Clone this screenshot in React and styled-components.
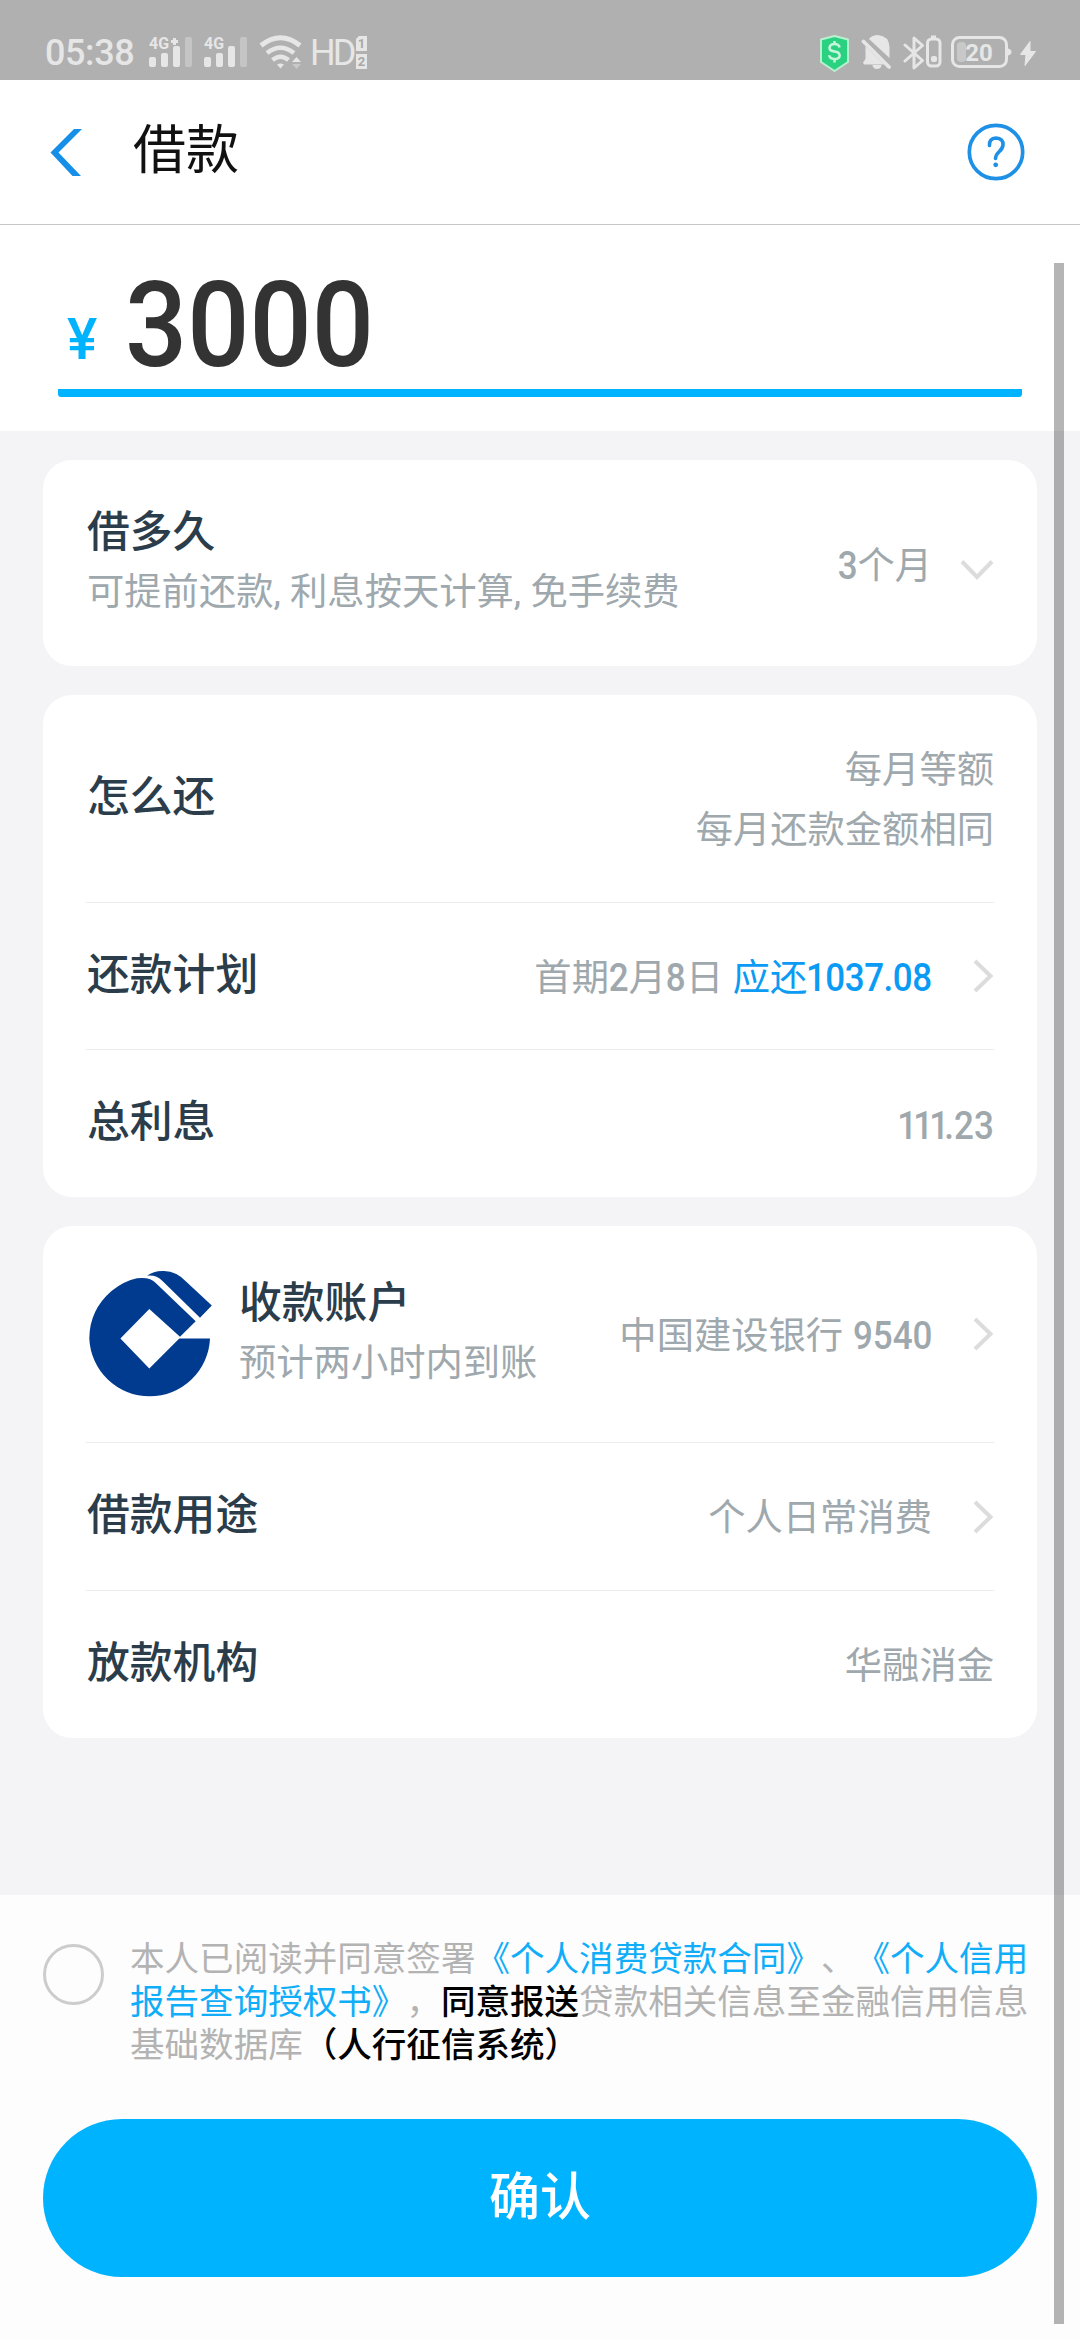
import React from "react";
import styled, { createGlobalStyle } from "styled-components";

const GlobalStyle = createGlobalStyle`
  * { box-sizing: border-box; }
  body { margin: 0; background: #f4f4f7; }
`;

const Screen = styled.div`
  position: relative;
  display: flex;
  flex-direction: column;
  width: 1080px;
  height: 2340px;
  overflow: hidden;
  background: #f4f4f7;
  font-family: Roboto, "Noto Sans CJK SC", sans-serif;
  text-spacing-trim: space-all;
`;

const StatusBar = styled.div`
  display: flex;
  justify-content: space-between;
  height: 80px;
  padding: 33px 44px 0 45px;
  background: #b0b0b0;
  color: #e6e6e6;
`;

const StatusGroup = styled.div`
  display: flex;
  align-items: flex-start;
  height: 40px;
`;

const StatusText = styled.span`
  width: ${(p) => p.$width}px;
  margin-right: ${(p) => p.$after}px;
  font-size: 36px;
  font-weight: ${(p) => p.$weight || 400};
  line-height: 40px;
  white-space: nowrap;
  letter-spacing: ${(p) => p.$spacing || 0}px;
`;

const StatusIcon = styled.svg`
  display: block;
  flex: none;
  height: 40px;
  margin-right: ${(p) => p.$after || 0}px;
  font-family: Roboto, sans-serif;
  font-weight: 700;
`;

const Header = styled.header`
  display: flex;
  align-items: center;
  height: 145px;
  padding: 0 55px 0 50px;
  border-bottom: 1px solid #c6c6c6;
  background: #fff;
`;

const Title = styled.h1`
  flex: 1;
  margin: 0 0 2px 50px;
  font-size: 53px;
  font-weight: 400;
  line-height: 70px;
  color: #111;
`;

const HeaderIcon = styled.svg`
  display: block;
  flex: none;
`;

const AmountSection = styled.section`
  height: 206px;
  padding: 0 58px;
  background: #fff;
`;

const AmountField = styled.div`
  display: flex;
  align-items: flex-start;
  height: 172px;
  padding-left: 9px;
  border-bottom: 8px solid #00b3ff;
  border-radius: 3px;
`;

const Currency = styled.span`
  width: 58px;
  padding-top: 82px;
  font-family: Roboto, sans-serif;
  font-size: 57px;
  line-height: 66px;
  font-weight: 500;
  color: #00b3ff;
`;

const Amount = styled.span`
  padding-top: 31px;
  font-size: 119px;
  font-weight: 500;
  line-height: 140px;
  color: #333;
  transform: scaleX(0.92);
  transform-origin: left;
`;

const Content = styled.main`
  display: flex;
  flex-direction: column;
  gap: 29px;
  height: 1464px;
  padding: 29px 43px 0;
`;

const Card = styled.section`
  padding: 0 43px;
  border-radius: 29px;
  background: #fff;
`;

const Row = styled.div`
  display: flex;
  align-items: center;
  height: ${(p) => p.$height}px;
  border-bottom: ${(p) => (p.$last ? "none" : "1px solid #ededee")};
`;

const LabelBlock = styled.div`
  flex: 1;
  padding-bottom: ${(p) => p.$lift ?? 3}px;
  padding-left: 1px;
`;

const Label = styled.div`
  font-size: 42.8px;
  font-weight: 500;
  line-height: 60px;
  color: #2b3d4a;
`;

const Note = styled.div`
  font-size: 37.3px;
  line-height: 60px;
  color: #9ea8ad;
  white-space: nowrap;
`;

const Value = styled.div`
  padding-top: ${(p) => p.$drop || 0}px;
  font-size: 37.3px;
  line-height: 60px;
  text-align: right;
  white-space: nowrap;
  color: #9ea8ad;
`;

const Due = styled.span`
  color: #0b9bf4;
`;

/* Condensed numerals: the negative margin takes up the width lost to the scale. */
const Digits = styled.span`
  display: inline-block;
  margin-left: ${(p) => p.children.length * -1.7}px;
  font-size: 38px;
  font-weight: 500;
  letter-spacing: ${(p) => p.$spacing || 0}px;
  transform: scaleX(0.92);
  transform-origin: right;
`;

const Arrow = styled.svg`
  display: block;
  flex: none;
  margin-left: ${(p) => p.$before}px;
  margin-top: ${(p) => p.$drop || 0}px;
`;

const BankLogo = styled.svg`
  display: block;
  flex: none;
  margin: 0 26px 0 3px;
`;

const Footer = styled.footer`
  height: 445px;
  padding: 42px 43px 0;
  background: #fdfdfd;
`;

const Agreement = styled.div`
  display: flex;
  height: 182px;
`;

const Radio = styled.span`
  flex: none;
  width: 61px;
  height: 61px;
  margin: 7px 26px 0 0;
  border: 3px solid #ccc;
  border-radius: 50%;
`;

const Terms = styled.p`
  width: 905px;
  margin: 1px -10px 0 0;
  font-size: 34.56px;
  line-height: 43px;
  color: #b3b3b3;
`;

const TermLine = styled.span`
  display: block;
  white-space: nowrap;
`;

const TermLink = styled.span`
  color: #10adf8;
`;

const TermStrong = styled.span`
  color: #000;
  font-weight: 500;
`;

const Confirm = styled.button`
  display: block;
  width: 994px;
  height: 158px;
  padding: 0 0 10px;
  border: 0;
  border-radius: 79px;
  background: #00b3ff;
  color: #fff;
  font-family: inherit;
  font-size: 51px;
  font-weight: 500;
`;

const ScrollThumb = styled.div`
  position: absolute;
  top: 263px;
  right: 16px;
  width: 10px;
  height: 2061px;
  background: rgba(0, 0, 0, 0.29);
`;

function Signal({ plus, after }) {
  return (
    <StatusIcon $after={after} width="44" height="40" viewBox="0 0 44 40" fill="#e6e6e6">
      <text x="0" y="16" fontSize="17" textLength="20" lengthAdjust="spacingAndGlyphs">4G</text>
      {plus && <path d="M24 5h3v2h2v3H27V12h-3v-2h-2v-3h2z" />}
      <rect x="0" y="24" width="7" height="10" rx="2" />
      <rect x="12" y="20" width="7" height="14" rx="2" />
      <rect x="24" y="13" width="7" height="21" rx="2" />
      <rect x="36" y="4" width="7" height="30" rx="2" opacity="0.4" />
    </StatusIcon>
  );
}

function Chevron({ down }) {
  return down ? (
    <Arrow $before={28} $drop={13} width="34" height="22" viewBox="0 0 34 22">
      <path d="M2 2.5l15 15.5 15-15.5" fill="none" stroke="#dcdcdc" strokeWidth="4" />
    </Arrow>
  ) : (
    <Arrow $before={41} width="21" height="34" viewBox="0 0 21 34">
      <path d="M2 2l15.500 15-15.500 15" fill="none" stroke="#dcdcdc" strokeWidth="4" />
    </Arrow>
  );
}

export default function App() {
  return (
    <>
      <GlobalStyle />
      <Screen>
        <StatusBar>
          <StatusGroup>
            <StatusText $width={90} $after={14} $weight={500} $spacing={-0.4}>05:38</StatusText>
            <Signal plus after={11} />
            <Signal after={11} />
            <StatusIcon $after={7} width="44" viewBox="0 0 44 40" fill="none" stroke="#e6e6e6">
              <path d="M2 12.500Q21.500-3 41 12.500" strokeWidth="5" />
              <path d="M8 20Q21.500 9.500 35 20" strokeWidth="4.500" />
              <path d="M13.500 27Q21.500 20.500 29.500 27" strokeWidth="4.500" />
              <path d="M18 31.500Q21.500 29.500 25 31.500L21.500 35.500z" fill="#e6e6e6" stroke="none" />
              <path d="M33 29h9l-4.500-5z" fill="#e6e6e6" stroke="none" />
              <path d="M33 31h9l-4.500 5z" fill="#c8c8c8" stroke="none" />
            </StatusIcon>
            <StatusText $width={44} $after={2} $spacing={-3}>HD</StatusText>
            <StatusIcon width="12" viewBox="0 0 12 40" fill="#e6e6e6">
              <path d="M3 3h8v15H0V6z" />
              <path d="M0 21h11v15H0z" />
              <text x="5.500" y="15" fontSize="13" textAnchor="middle" fill="#a8a8a8">1</text>
              <text x="5.500" y="33" fontSize="13" textAnchor="middle" fill="#a8a8a8">2</text>
            </StatusIcon>
          </StatusGroup>
          <StatusGroup>
            <StatusIcon $after={11} width="31" viewBox="0 0 31 40">
              <path d="M15.500 3L29 6.500V29L15.500 38 2 29V6.500z" fill="#2ad181" stroke="#b9f0d0" strokeWidth="2" strokeLinejoin="round" />
              <path d="M20.500 14.500Q20 11 15.500 11T10.500 14.800Q10.500 18 15.500 18.500T20.700 22.500Q20.500 26 15.500 26T10.300 22.300M15.500 8v3M15.500 26v3.500" fill="none" stroke="#c6f5da" strokeWidth="2.600" />
            </StatusIcon>
            <StatusIcon $after={11} width="31" viewBox="0 0 31 40" fill="#e6e6e6">
              <path d="M8 6Q11 2 17 2 28 3 28.500 14V25z" />
              <path d="M4.500 13L23 31.500H3L2 29.500 4.500 26z" />
              <path d="M11.500 32h9q-.5 4-4.500 4t-4.500-4z" />
              <path d="M2.500 8.500L28 34" stroke="#e6e6e6" strokeWidth="3.800" strokeLinecap="round" />
            </StatusIcon>
            <StatusIcon $after={9} width="39" viewBox="0 0 39 40" fill="none" stroke="#e6e6e6" strokeWidth="3">
              <path d="M2 12l17.500 15.500-8.500 7.500V5l8.500 7.500L2 28" strokeLinejoin="round" strokeLinecap="round" />
              <rect x="24.500" y="6" width="12.500" height="27" rx="4" />
              <path d="M28 4h5" />
              <rect x="28" y="23" width="6" height="6" rx="2" fill="#e6e6e6" stroke="none" />
            </StatusIcon>
            <StatusIcon $after={8} width="61" viewBox="0 0 61 40" fill="none">
              <rect x="1.500" y="4.500" width="54" height="29" rx="7" stroke="#e6e6e6" strokeWidth="3" />
              <rect x="6" y="9" width="9" height="20" rx="4" fill="#c8c8c8" />
              <path d="M57 15.500q3.500 1 3.500 3.500T57 22.500z" fill="#e6e6e6" />
              <text x="28" y="27.500" fontSize="24" textAnchor="middle" fill="#e6e6e6">20</text>
            </StatusIcon>
            <StatusIcon width="16" viewBox="0 0 16 40" fill="#e6e6e6">
              <path d="M10 8.500L.5 21.500H6L5 32.500 15.500 18.500H10z" stroke="#e6e6e6" strokeLinejoin="round" />
            </StatusIcon>
          </StatusGroup>
        </StatusBar>

        <Header>
          <HeaderIcon width="33" height="47" viewBox="0 0 33 47">
            <path d="M24 0h8L8.500 23.500 31 47H22.500L.5 23.500z" fill="#168fe8" />
          </HeaderIcon>
          <Title>借款</Title>
          <HeaderIcon width="58" height="58" viewBox="0 0 58 58" fill="none" stroke="#1e90e6">
            <circle cx="29" cy="29" r="26.700" strokeWidth="3.700" />
            <path d="M22.500 22.500Q22 15.500 29 15 36.500 15.300 36 22q-.3 3.500-3.700 6.500-3.800 3.500-3.800 7" strokeWidth="3.600" strokeLinecap="round" />
            <circle cx="28.700" cy="41.800" r="2.400" fill="#1e90e6" stroke="none" />
          </HeaderIcon>
        </Header>

        <AmountSection>
          <AmountField>
            <Currency>¥</Currency>
            <Amount>3000</Amount>
          </AmountField>
        </AmountSection>

        <Content>
          <Card>
            <Row $height={206} $last>
              <LabelBlock $lift={2}>
                <Label>借多久</Label>
                <Note>可提前还款, 利息按天计算, 免手续费</Note>
              </LabelBlock>
              <Value $drop={5}><Digits>3</Digits>个月</Value>
              <Chevron down />
            </Row>
          </Card>

          <Card>
            <Row $height={208}>
              <LabelBlock><Label>怎么还</Label></LabelBlock>
              <Value $drop={2}>每月等额<br />每月还款金额相同</Value>
            </Row>
            <Row $height={147}>
              <LabelBlock><Label>还款计划</Label></LabelBlock>
              <Value $drop={4}>
                首期<Digits>2</Digits>月<Digits>8</Digits>日{" "}
                <Due>应还<Digits $spacing={-0.5}>1037.08</Digits></Due>
              </Value>
              <Chevron />
            </Row>
            <Row $height={147} $last>
              <LabelBlock><Label>总利息</Label></LabelBlock>
              <Value $drop={5}><Digits $spacing={-4.2}>111</Digits><Digits>.23</Digits></Value>
            </Row>
          </Card>

          <Card>
            <Row $height={217}>
              <BankLogo width="123" height="129" viewBox="0 0 123 129" fill="#003b8f">
                <path d="M121 68.400A60.400 60.400 0 0 1 .3 68.400Q.5 40 22.500 21 35 11 48 8.300 61 6.500 67 13.300L106.700 51.200 91 66.700 60.300 39 31.400 68.400 60.300 98.400 90.300 68.400z" />
                <path d="M58 5.700Q65 .5 75 1 88 1.500 97 11.600L122.800 35.400 111 47.700 73.500 11Q67 4.500 58 5.700z" />
              </BankLogo>
              <LabelBlock $lift={3}>
                <Label>收款账户</Label>
                <Note>预计两小时内到账</Note>
              </LabelBlock>
              <Value $drop={4}>中国建设银行 <Digits>9540</Digits></Value>
              <Chevron />
            </Row>
            <Row $height={148}>
              <LabelBlock><Label>借款用途</Label></LabelBlock>
              <Value $drop={3}>个人日常消费</Value>
              <Chevron />
            </Row>
            <Row $height={147} $last>
              <LabelBlock><Label>放款机构</Label></LabelBlock>
              <Value $drop={3}>华融消金</Value>
            </Row>
          </Card>
        </Content>

        <Footer>
          <Agreement>
            <Radio />
            <Terms>
              <TermLine>本人已阅读并同意签署<TermLink>《个人消费贷款合同》</TermLink>、<TermLink>《个人信用</TermLink></TermLine>
              <TermLine><TermLink>报告查询授权书》</TermLink>，<TermStrong>同意报送</TermStrong>贷款相关信息至金融信用信息</TermLine>
              <TermLine>基础数据库<TermStrong>（人行征信系统）</TermStrong></TermLine>
            </Terms>
          </Agreement>
          <Confirm>确认</Confirm>
        </Footer>
        <ScrollThumb />
      </Screen>
    </>
  );
}
